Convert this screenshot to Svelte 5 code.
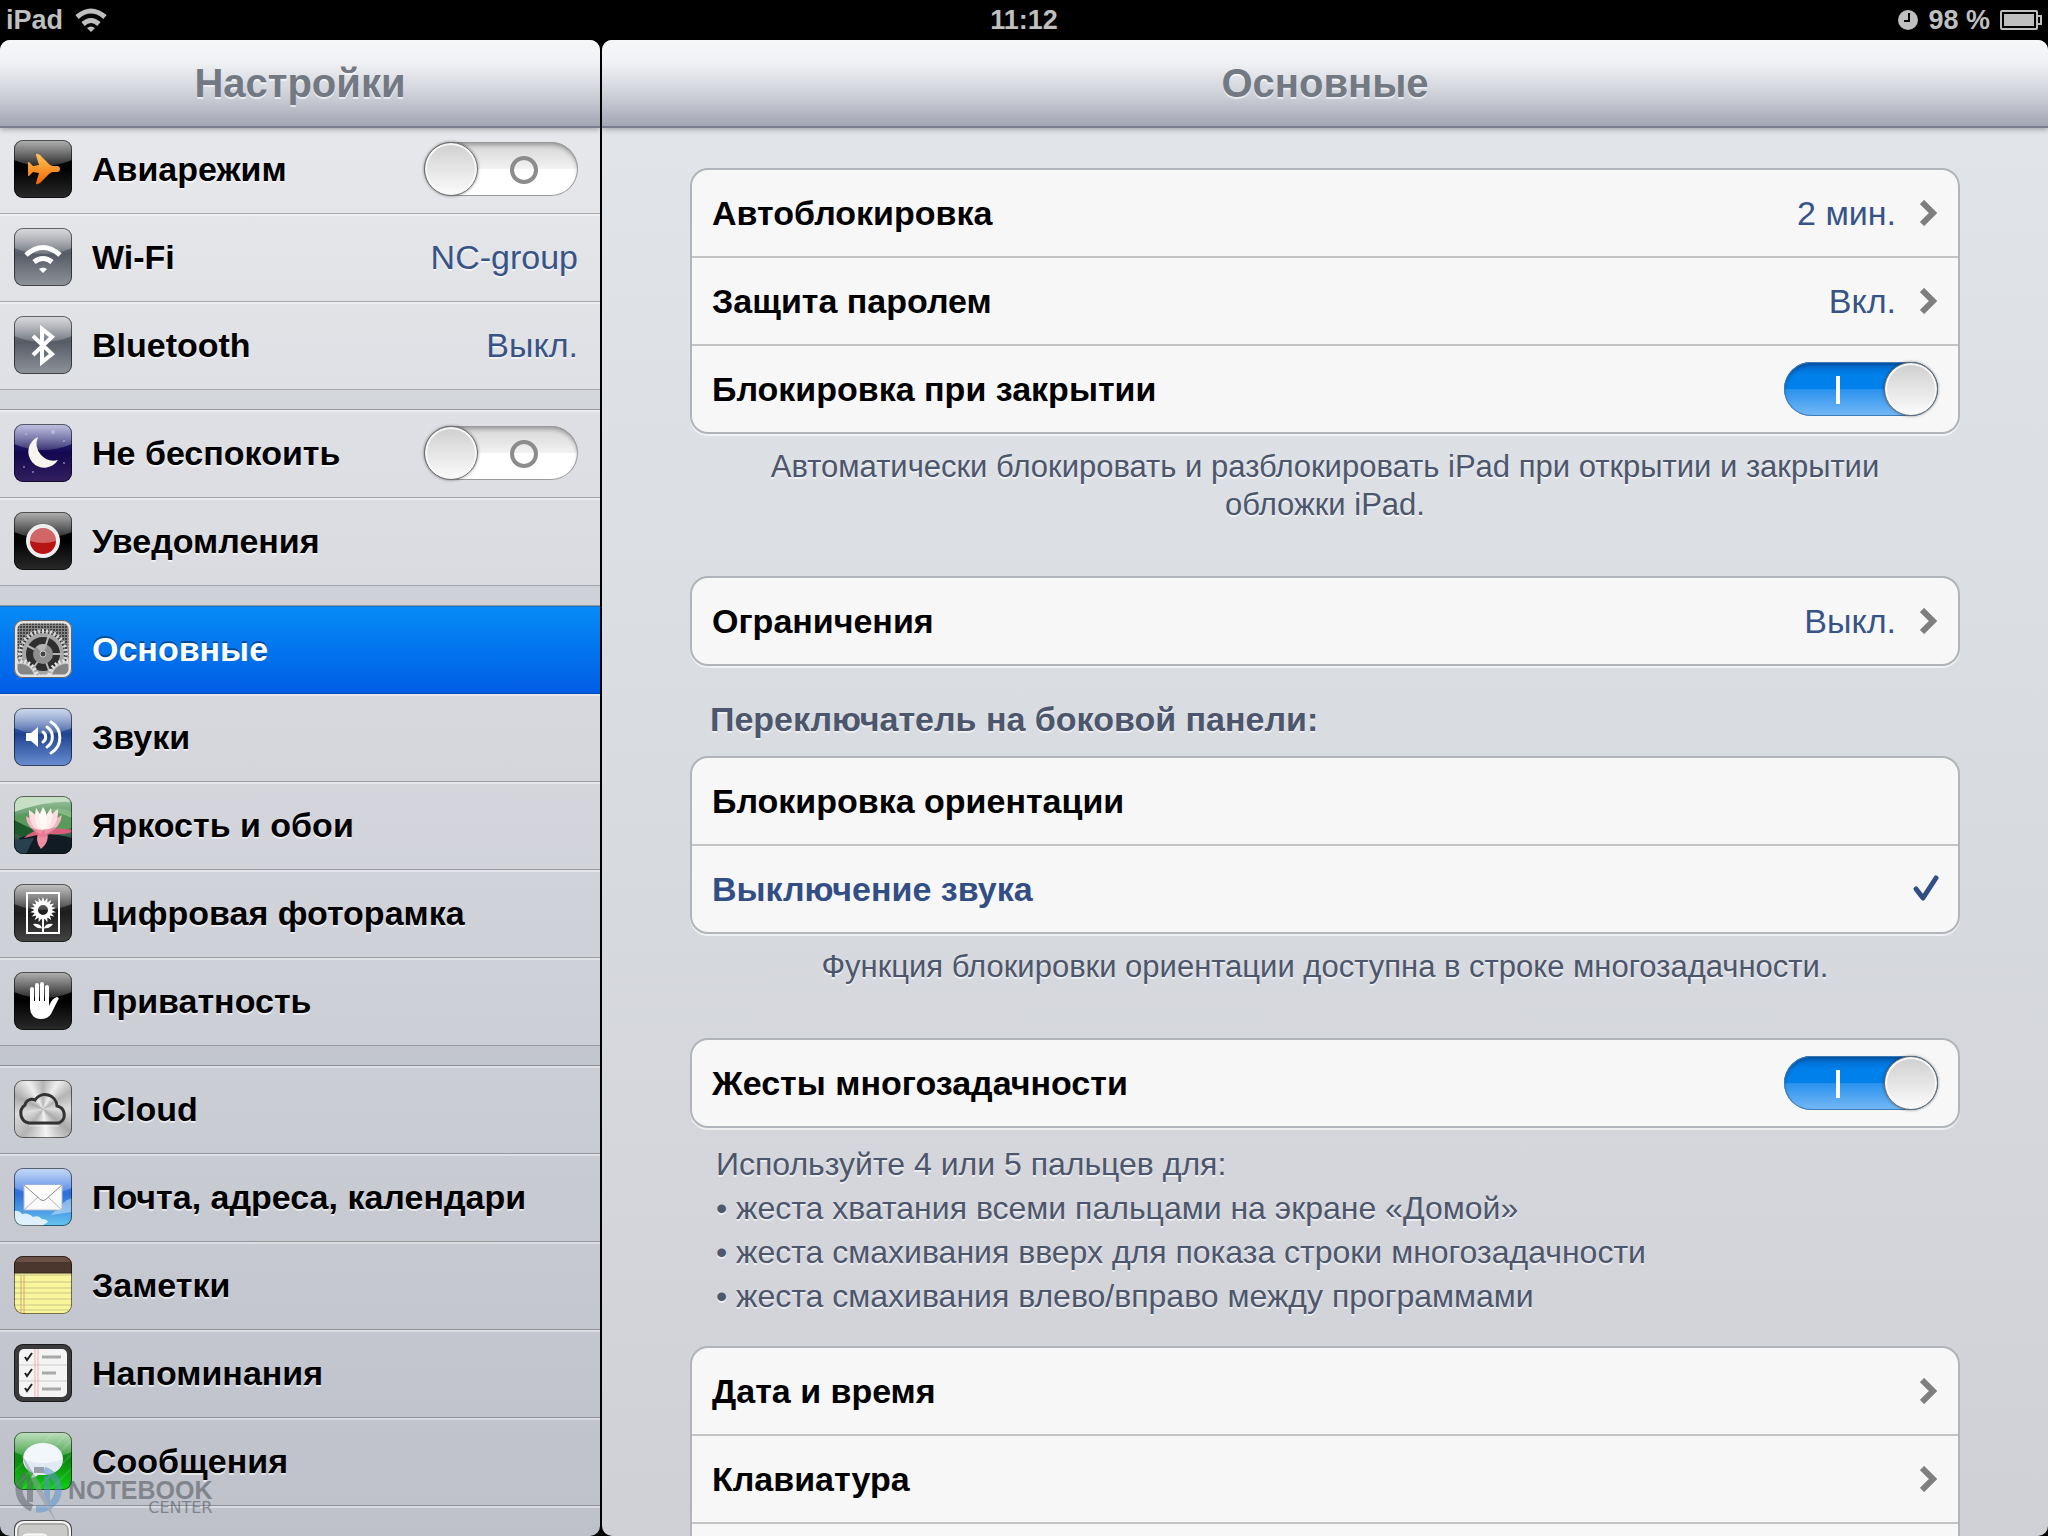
<script lang="ts">
  let airplane = $state(false);
  let doNotDisturb = $state(false);
  let lockOnClose = $state(true);
  let gestures = $state(true);
  let sideSwitch = $state('mute');
  let current = $state('general');

  const menu = [
    [
      { id: 'airplane', label: 'Авиарежим', toggle: true },
      { id: 'wifi', label: 'Wi-Fi', value: 'NC-group' },
      { id: 'bluetooth', label: 'Bluetooth', value: 'Выкл.' }
    ],
    [
      { id: 'dnd', label: 'Не беспокоить', toggle: true },
      { id: 'notifications', label: 'Уведомления' }
    ],
    [
      { id: 'general', label: 'Основные' },
      { id: 'sounds', label: 'Звуки' },
      { id: 'wallpaper', label: 'Яркость и обои' },
      { id: 'frame', label: 'Цифровая фоторамка' },
      { id: 'privacy', label: 'Приватность' }
    ],
    [
      { id: 'icloud', label: 'iCloud' },
      { id: 'mail', label: 'Почта, адреса, календари' },
      { id: 'notes', label: 'Заметки' },
      { id: 'reminders', label: 'Напоминания' },
      { id: 'messages', label: 'Сообщения' },
      { id: 'facetime', label: '' }
    ]
  ];

  const glossy = ['airplane', 'wifi', 'bluetooth', 'dnd', 'notifications', 'sounds', 'frame', 'privacy', 'mail', 'messages'];

  const range = (n: number) => Array.from({ length: n }, (_, i) => i);
</script>

{#snippet icon(id: string)}
  <svg class="tile {id}" viewBox="0 0 58 58" aria-hidden="true">
    {#if id === 'airplane'}
      <defs>
        <linearGradient id="orange" x1="0" y1="0" x2="0" y2="1">
          <stop offset="0" stop-color="#ffc55a" />
          <stop offset="1" stop-color="#f06400" />
        </linearGradient>
      </defs>
    {:else if id === 'mail'}
      <path fill="#fff" opacity=".8" d="M0 43Q5 42 8 46Q14 44 19 49Q25 47 28 51Q33 51 34 54L28 58H0Z" />
      <path fill="#fff" opacity=".4" d="M37 47Q42 41 47 42Q47 33 58 30V44Q50 45 37 47Z" />
    {:else if id === 'messages'}
      <path stroke="#fff" stroke-opacity=".1" stroke-width="2" d="M0 40L40 0M0 55L55 0M8 58L58 8M22 58L58 22M36 58L58 36" />
    {/if}

    {#if glossy.includes(id)}
      <defs>
        <linearGradient id="gloss-{id}" x1="0" y1="0" x2="0" y2="1">
          <stop offset="0" stop-color="#fff" stop-opacity=".68" />
          <stop offset="1" stop-color="#fff" stop-opacity=".16" />
        </linearGradient>
      </defs>
      <path fill="url(#gloss-{id})" d="M0 0H58V20Q29 32 0 20Z" />
    {/if}

    {#if id === 'airplane'}
      <path fill="url(#orange)" d="M22 15Q22 13 24 14L26 15L35 24Q37 26 39 26H43Q46 26 46 29Q46 32 43 32H39Q37 32 35 34L26 43L24 44Q22 45 22 43L25 33L19 32L15 36H14V22H15L19 26L25 25Z" />
    {:else if id === 'wifi'}
      <g fill="none" stroke="#fff" stroke-width="5">
        <path d="M12 27Q29 12 46 27" />
        <path d="M20 34Q29 27 38 34" />
      </g>
      <path fill="#fff" d="M25 41Q29 38 33 41L29 45Z" />
    {:else if id === 'bluetooth'}
      <path fill="none" stroke="#fff" stroke-width="4" d="M19 20L38 38L28 46V13L38 21L19 39" />
    {:else if id === 'dnd'}
      <g fill="#c9ccf5" opacity=".6">
        <circle cx="39" cy="8" r="2" /><circle cx="12" cy="10" r="1" /><circle cx="50" cy="17" r="1" />
        <circle cx="10" cy="43" r="1" /><circle cx="50" cy="39" r="1" /><circle cx="19" cy="48" r="1" />
      </g>
      <path fill="#f7f5ee" d="M24 13A16 16 0 1 0 44 36A17 17 0 0 1 24 13Z" />
    {:else if id === 'notifications'}
      <circle cx="29" cy="29" r="17" fill="#eee" />
      <circle cx="29" cy="29" r="13" fill="#b81414" />
      <path fill="#fff" opacity=".35" d="M16 29A13 13 0 0 1 42 29Q29 33 16 29Z" />
    {:else if id === 'general'}
      <defs>
        <pattern id="mesh" width="3" height="3" patternUnits="userSpaceOnUse">
          <circle cx="1" cy="1" r="1" fill="#2a2a2a" />
        </pattern>
      </defs>
      <rect width="58" height="58" fill="#858585" />
      <rect width="58" height="58" fill="url(#mesh)" />
      <circle cx="29" cy="34" r="22" fill="#2f2f2f" />
      <g fill="#d8d8d8">
        {#each range(36) as i}
          <path d="M28 14L28 9H30L30 14Z" transform="rotate({i * 10} 29 34)" />
        {/each}
      </g>
      <circle cx="29" cy="34" r="19" fill="none" stroke="#a6a6a6" stroke-width="4" />
      <path stroke="#b5b5b5" stroke-width="2" d="M29 34L35 15M29 34H48M29 34L36 53M29 34L18 50M29 34L12 25" />
      <circle cx="29" cy="34" r="10" fill="#8f8f8f" />
      <path fill="#b4b4b4" d="M29 34L22 27A10 10 0 0 1 33 25Z" />
      <circle cx="29" cy="34" r="3" fill="#444" stroke="#ccc" />
      {#each [6, 52] as cx}
        <circle {cx} cy="58" r="15" fill="#858585" stroke="#c4c4c4" stroke-width="2" />
        <circle {cx} cy="58" r="17" fill="none" stroke="#e4e4e4" stroke-width="4" stroke-dasharray="2 2" />
      {/each}
      <rect x="1" y="1" width="56" height="56" rx="8" fill="none" stroke="#e4e4e4" stroke-width="5" />
    {:else if id === 'sounds'}
      <path fill="#fff" d="M12 25H17L24 19V39L17 33H12Z" />
      <g fill="none" stroke="#fff" stroke-width="3" stroke-linecap="round">
        <path d="M29 24A6 6 0 0 1 29 34" />
        <path d="M33 19A12 12 0 0 1 33 39" />
        <path d="M37 14A18 18 0 0 1 37 45" />
      </g>
    {:else if id === 'wallpaper'}
      <path fill="#c6dfc4" d="M0 0H58V6Q34 4 0 16Z" />
      <path fill="#5a9a5c" d="M0 20Q26 12 58 20V32Q30 40 0 35Z" />
      <path fill="#86b884" d="M34 14Q48 10 58 16V22Q44 16 34 14Z" />
      <path fill="#1d5a2c" d="M0 24L22 35L14 42L0 38Z" />
      <path fill="#101b24" d="M5 42Q29 34 58 42V58H10Z" />
      <path fill="#27414f" d="M0 44L20 42L12 58H0Z" />
      <path fill="#d95f7c" d="M10 42Q18 34 29 34L28 38ZM58 34Q46 31 32 34L36 38Q50 39 58 36Z" />
      <path fill="#f08ca2" d="M25 36Q20 44 27 53Q36 46 33 36Z" />
      <path fill="#f2b6c2" d="M12 20Q12 31 26 38Q24 26 12 20ZM48 19Q47 31 33 38Q35 26 48 19Z" />
      <path fill="#fbdcdf" d="M15 14Q14 29 27 38Q29 22 15 14ZM44 13Q45 29 32 38Q30 22 44 13Z" />
      <path fill="#fff0ec" d="M22 12Q18 26 28 38Q32 24 22 12ZM37 12Q41 26 31 38Q27 24 37 12Z" />
      <path fill="#fffaf5" d="M29 11Q22 22 29 36Q37 22 29 11Z" />
      <path fill="#e8718d" opacity=".7" d="M18 32Q29 36 41 31Q38 38 31 41H27Q20 38 18 32Z" />
    {:else if id === 'frame'}
      <rect x="13" y="9" width="32" height="40" fill="none" stroke="#fff" stroke-width="2" />
      {#each range(18) as i}
        <path fill="#fff" d="M27 19L29 13L31 19Z" transform="rotate({i * 20} 29 26)" />
      {/each}
      <circle cx="29" cy="26" r="7" fill="none" stroke="#fff" stroke-width="4" />
      <path fill="#fff" d="M28 35H30V49H28ZM28 44Q22 45 19 40Q26 39 28 44ZM30 44Q36 45 39 40Q32 39 30 44Z" />
    {:else if id === 'privacy'}
      <g stroke="#fff" stroke-width="4" stroke-linecap="round">
        <path d="M18 17V34M23 13V34M28 12V34M33 15V34" />
      </g>
      <path fill="#fff" d="M16 29H35V34Q38 26 43 25Q46 26 44 28Q40 36 37 42Q34 47 27 47Q17 47 16 36Z" />
    {:else if id === 'icloud'}
      <path fill="none" stroke="#333" stroke-width="3" d="M15 43A10 10 0 0 1 11 25A7 7 0 0 1 21 20A12 12 0 0 1 43 26A9 9 0 0 1 45 43Z" />
      <path fill="none" stroke="#fff" opacity=".6" d="M15 46H45" />
    {:else if id === 'mail'}
      <rect x="10" y="17" width="38" height="25" fill="#fafafa" stroke="#b5bccb" />
      <path fill="none" stroke="#b3b3b3" d="M10 42L24 29M48 42L34 29" />
      <path fill="#fff" stroke="#8b8b8b" d="M10 17L27 32Q29 33 31 32L48 17" />
    {:else if id === 'notes'}
      <path fill="#4c372f" d="M0 0H58V17H0Z" />
      <path fill="#6b5046" d="M0 0H58V6H0Z" />
      <path stroke="#35241d" d="M0 17H58" />
      <path stroke="#c9c68c" d="M0 19H58M0 26H58M0 32H58M0 37H58M0 43H58M0 49H58M0 54H58" />
      <path stroke="#d0aa6a" d="M7 19V58M10 19V58" />
    {:else if id === 'reminders'}
      <rect x="5" y="5" width="48" height="48" rx="5" fill="#f4f4f4" />
      <path stroke="#cdcdcd" d="M5 21H53M5 37H53" />
      <path stroke="#f3aaaa" d="M21 5V53M24 5V53" />
      <path stroke="#a8a8a8" stroke-width="3" d="M28 13H47M28 29H42M28 45H47" />
      <path fill="none" stroke="#222" stroke-width="2" d="M11 13L13 16L18 9M11 29L13 32L18 25M11 44L13 47L18 40" />
    {:else if id === 'messages'}
      <path fill="#f2f7fc" d="M29 11C41 11 49 18 49 27C49 37 40 43 29 43Q26 43 24 43Q21 46 17 46Q19 43 19 41C12 38 9 33 9 27C9 18 17 11 29 11Z" />
      <path fill="#cfdcee" opacity=".5" d="M9 27Q29 35 49 27C49 37 40 43 29 43C17 43 9 36 9 27Z" />
    {:else if id === 'facetime'}
      <rect x="2" y="2" width="54" height="54" rx="8" fill="#c9c9c7" stroke="#f4f4f4" stroke-width="2" />
      <rect x="4" y="4" width="50" height="50" rx="6" fill="none" stroke="#8b8b8b" />
      <rect x="8" y="14" width="26" height="24" rx="5" fill="#eee" stroke="#fff" />
    {/if}
    <rect class="edge" width="58" height="58" rx="9" />
  </svg>
{/snippet}

{#snippet wifiSign()}
  <svg class="wifi-sign" viewBox="0 0 32 24" aria-hidden="true">
    <g fill="none" stroke="#bfbfbf" stroke-width="5">
      <path d="M2 9Q16 -3 30 9" />
      <path d="M8 16Q16 9 24 16" />
    </g>
    <path fill="#bfbfbf" d="M12 20Q16 17 20 20L16 24Z" />
  </svg>
{/snippet}

{#snippet chevron()}
  <svg class="chevron" viewBox="0 0 18 26" aria-hidden="true">
    <path d="M2 2L13 13L2 24" fill="none" stroke="#7f7f7f" stroke-width="6" />
  </svg>
{/snippet}

<div class="screen">
  <div class="statusbar">
    <div class="left">iPad {@render wifiSign()}</div>
    <time>11:12</time>
    <div class="right">
      <svg class="clock" viewBox="0 0 20 20" aria-hidden="true">
        <circle cx="10" cy="10" r="10" fill="#bfbfbf" />
        <path d="M11 3V11H6" fill="none" stroke="#000" stroke-width="2" />
      </svg>
      <span>98 %</span>
      <svg class="battery" viewBox="0 0 42 20" aria-hidden="true">
        <rect x="1" y="1" width="36" height="18" rx="1" fill="none" stroke="#bfbfbf" stroke-width="2" />
        <rect x="4" y="4" width="30" height="12" fill="#bfbfbf" />
        <path d="M38 6H41V14H38" fill="none" stroke="#bfbfbf" stroke-width="2" />
      </svg>
    </div>
  </div>

  <div class="panes">
    <aside class="sidebar">
      <header><h1>Настройки</h1></header>
      <nav>
        {#each menu as group}
          <ul>
            {#each group as item}
              <li>
                {#if item.toggle}
                  <label class="item">
                    {@render icon(item.id)}
                    <span class="name">{item.label}</span>
                    {#if item.id === 'airplane'}
                      <input class="switch" type="checkbox" bind:checked={airplane} />
                    {:else}
                      <input class="switch" type="checkbox" bind:checked={doNotDisturb} />
                    {/if}
                  </label>
                {:else}
                  <button
                    type="button"
                    class="item"
                    class:active={current === item.id}
                    aria-label={item.label ? undefined : item.id}
                    onclick={() => (current = item.id)}
                  >
                    {@render icon(item.id)}
                    <span class="name">{item.label}</span>
                    {#if item.value}<span class="value">{item.value}</span>{/if}
                  </button>
                {/if}
              </li>
            {/each}
          </ul>
        {/each}
      </nav>
    </aside>

    <main class="detail">
      <header><h1>Основные</h1></header>
      <div class="content">
        <section>
          <div class="card">
            <button type="button" class="row">
              <span class="name">Автоблокировка</span><span class="value">2 мин.</span>{@render chevron()}
            </button>
            <button type="button" class="row">
              <span class="name">Защита паролем</span><span class="value">Вкл.</span>{@render chevron()}
            </button>
            <label class="row">
              <span class="name">Блокировка при закрытии</span>
              <input class="switch" type="checkbox" bind:checked={lockOnClose} />
            </label>
          </div>
          <p class="hint">Автоматически блокировать и разблокировать iPad при открытии и закрытии обложки iPad.</p>
        </section>

        <section>
          <div class="card">
            <button type="button" class="row">
              <span class="name">Ограничения</span><span class="value">Выкл.</span>{@render chevron()}
            </button>
          </div>
        </section>

        <section>
          <h2 id="side-switch">Переключатель на боковой панели:</h2>
          <div class="card" role="radiogroup" aria-labelledby="side-switch">
            {#each [['rotation', 'Блокировка ориентации'], ['mute', 'Выключение звука']] as [value, label]}
              <label class="row" class:picked={sideSwitch === value}>
                <input class="hidden-radio" type="radio" name="side" {value} bind:group={sideSwitch} />
                <span class="name">{label}</span>
                {#if sideSwitch === value}
                  <svg class="check" viewBox="0 0 26 28" aria-hidden="true">
                    <path d="M4 14L11 23L24 3" fill="none" stroke="#324f85" stroke-width="5" stroke-linecap="round" stroke-linejoin="round" />
                  </svg>
                {/if}
              </label>
            {/each}
          </div>
          <p class="hint">Функция блокировки ориентации доступна в строке многозадачности.</p>
        </section>

        <section>
          <div class="card">
            <label class="row">
              <span class="name">Жесты многозадачности</span>
              <input class="switch" type="checkbox" bind:checked={gestures} />
            </label>
          </div>
          <div class="tips">
            <p>Используйте 4 или 5 пальцев для:</p>
            <p>• жеста хватания всеми пальцами на экране «Домой»</p>
            <p>• жеста смахивания вверх для показа строки многозадачности</p>
            <p>• жеста смахивания влево/вправо между программами</p>
          </div>
        </section>

        <section>
          <div class="card">
            <button type="button" class="row"><span class="name">Дата и время</span>{@render chevron()}</button>
            <button type="button" class="row"><span class="name">Клавиатура</span>{@render chevron()}</button>
            <button type="button" class="row" aria-label="Далее"></button>
          </div>
        </section>
      </div>
    </main>
  </div>

  <div class="watermark">
    <svg viewBox="0 0 56 64" aria-hidden="true">
      <path fill="none" stroke="#5f666e" stroke-width="7" d="M20 50A20 20 0 0 1 14 16" />
      <path fill="none" stroke="#5b92cc" stroke-width="7" d="M32 12A20 20 0 0 1 29 51L24 51" />
      <path fill="none" stroke="#5f666e" stroke-width="6" d="M18 44V20M22 12H32" />
      <path fill="none" stroke="#5b92cc" stroke-width="6" d="M35 46V18" />
      <path fill="#8d97a1" d="M8 -6L27 24L44 64L25 34Z" />
    </svg>
    <div class="words"><b>NOTEBOOK</b><span>CENTER</span></div>
  </div>
</div>

<style>
  :global(body) {
    margin: 0;
    background: #000;
  }

  .screen {
    position: relative;
    display: flex;
    flex-direction: column;
    height: 100vh;
    overflow: hidden;
    font-family: 'Liberation Sans', Arial, sans-serif;
    color: #000;
  }

  h1,
  h2,
  p,
  ul {
    margin: 0;
    padding: 0;
    list-style: none;
  }

  .statusbar {
    display: grid;
    grid-template-columns: 1fr auto 1fr;
    align-items: center;
    flex: none;
    height: 40px;
    padding: 0 6px;
    box-sizing: border-box;
    background: #000;
    color: #bfbfbf;
    font-size: 27px;
    font-weight: bold;
  }
  .statusbar .left,
  .statusbar .right {
    display: flex;
    align-items: center;
    gap: 12px;
  }
  .statusbar .right {
    justify-content: flex-end;
    gap: 10px;
  }
  .wifi-sign {
    width: 32px;
    height: 24px;
  }
  .clock {
    width: 20px;
    height: 20px;
  }
  .battery {
    width: 42px;
    height: 20px;
  }

  .panes {
    display: grid;
    grid-template-columns: 600px 1fr;
    gap: 2px;
    flex: 1;
    min-height: 0;
  }
  .sidebar,
  .detail {
    display: flex;
    flex-direction: column;
    min-height: 0;
    overflow: hidden;
    border-radius: 10px;
  }
  .sidebar {
    background: linear-gradient(#e9eaed, #bec1ca);
  }
  .detail {
    background: linear-gradient(#e2e5ea, #d9dce1 45%, #d0d1d6);
  }

  header {
    position: relative;
    z-index: 1;
    display: flex;
    align-items: center;
    justify-content: center;
    flex: none;
    height: 88px;
    box-sizing: border-box;
    border-bottom: 2px solid #797d8d;
    background: linear-gradient(#f6f7f9, #f1f2f5 25%, #d2d4dc 60%, #a3a6b4);
    box-shadow: 0 1px 6px rgba(0, 0, 0, .35);
  }
  h1 {
    font-size: 40px;
    line-height: 48px;
    color: #727982;
    text-shadow: 0 2px 0 rgba(255, 255, 255, .6);
  }

  nav {
    display: flex;
    flex-direction: column;
    gap: 20px;
    margin-top: -2px;
  }
  nav ul {
    border-top: 1px solid rgba(0, 0, 0, .28);
    margin-top: -1px;
    box-shadow: 0 20px 0 rgba(120, 125, 140, .1);
  }

  .item,
  .row {
    display: flex;
    align-items: center;
    width: 100%;
    height: 88px;
    box-sizing: border-box;
    border: 0;
    background: none;
    font: inherit;
    font-size: 34px;
    line-height: 40px;
    text-align: left;
    color: #000;
    cursor: pointer;
  }
  .item {
    gap: 20px;
    padding: 0 22px 2px 14px;
    box-shadow: inset 0 -1px 0 rgba(0, 0, 0, .25), inset 0 2px 0 rgba(255, 255, 255, .4);
    text-shadow: 0 2px 0 rgba(255, 255, 255, .6);
  }
  .item.active {
    background: linear-gradient(#068cf6, #005de6);
    box-shadow: inset 0 1px 0 #1374c9, inset 0 -1px 0 #0049b8;
    color: #fff;
    text-shadow: 0 -2px 0 rgba(0, 0, 0, .4);
  }
  .name {
    flex: 1;
    font-weight: bold;
  }
  .value {
    color: #385487;
  }

  .tile {
    flex: none;
    width: 58px;
    height: 58px;
    border-radius: 9px;
  }
  .edge {
    fill: none;
    stroke: #000;
    stroke-opacity: .55;
    stroke-width: 2;
  }
  .airplane,
  .notifications,
  .privacy {
    background: linear-gradient(#111, #000 50%, #2a2a2a);
  }
  .wifi,
  .bluetooth {
    background: linear-gradient(#8a8d94, #565b66 45%, #8f939a);
  }
  .dnd {
    background: linear-gradient(#3c44a0, #140850 50%, #33205f);
  }
  .general {
    background: #888;
  }
  .sounds {
    background: linear-gradient(#6a8bc9, #1f4391 45%, #6b8fd0);
  }
  .wallpaper {
    background: linear-gradient(#9cc7a0, #5d9464 40%, #122530);
  }
  .frame {
    background: linear-gradient(#444, #1d1d1d 50%, #444);
  }
  .icloud {
    background: conic-gradient(#b4b4b4, #eee 8%, #b4b4b4 16%, #ddd 25%, #aaa 36%, #f4f4f4 48%, #b4b4b4 60%, #ddd 72%, #aaa 82%, #eee 92%, #b4b4b4);
  }
  .mail {
    background: linear-gradient(#4d8ae8, #2e6fdc 45%, #64c6ee);
  }
  .notes {
    background: #f8f59a;
  }
  .reminders {
    background: #3b3b3d;
  }
  .messages {
    background: linear-gradient(#3a9a3a, #0b8a10 50%, #0fd30f);
  }
  .facetime {
    background: #999;
  }

  .switch {
    position: relative;
    flex: none;
    width: 154px;
    height: 54px;
    margin: 0;
    appearance: none;
    border-radius: 27px;
    background: linear-gradient(#d5d5d5, #ececec 40%, #f3f3f3 50%, #fff 51%);
    box-shadow: inset 0 0 0 1px #9a9a9a, inset 0 3px 4px rgba(0, 0, 0, .3);
    cursor: pointer;
  }
  .switch::before {
    content: '';
    position: absolute;
    top: 0;
    left: 0;
    width: 54px;
    height: 54px;
    box-sizing: border-box;
    border: 1px solid #6c6c6c;
    border-radius: 50%;
    background: linear-gradient(#cfcfcf, #fbfbfb);
    box-shadow: inset 0 0 0 2px #f8f8f8, 0 0 3px rgba(0, 0, 0, .5);
  }
  .switch::after {
    content: '';
    position: absolute;
    top: 14px;
    left: 86px;
    width: 28px;
    height: 28px;
    box-sizing: border-box;
    border: 4px solid #8c8c8c;
    border-radius: 50%;
  }
  .switch:checked {
    background: linear-gradient(#0068cd, #0080ea 25%, #0080ea 50%, #2a92ee 51%, #76b8f5);
    box-shadow: inset 0 0 0 1px #3f7bb5, inset 0 3px 4px rgba(0, 0, 0, .3);
  }
  .switch:checked::before {
    left: 100px;
  }
  .switch:checked::after {
    left: 52px;
    width: 4px;
    border: 0;
    border-radius: 0;
    background: #fff;
  }

  .content {
    padding: 40px 88px;
  }
  section {
    display: flex;
    flex-direction: column;
  }
  .card {
    overflow: hidden;
    border: 2px solid #b1b4b9;
    border-radius: 18px;
    background: #f7f7f7;
    box-shadow: 0 2px 0 rgba(255, 255, 255, .6);
  }
  .row {
    padding: 0 20px;
    border-bottom: 2px solid #c4c4c6;
  }
  .row:last-child {
    height: 86px;
    border-bottom: 0;
  }
  .row .value {
    margin-right: 24px;
  }
  .picked {
    color: #324f85;
  }
  .chevron {
    width: 18px;
    height: 26px;
  }
  .check {
    width: 26px;
    height: 28px;
    overflow: visible;
  }
  .hidden-radio {
    position: absolute;
    opacity: 0;
  }

  h2 {
    padding: 32px 20px 16px;
    font-size: 34px;
    line-height: 42px;
    color: #4c566c;
    text-shadow: 0 2px 0 rgba(255, 255, 255, .6);
  }
  .hint,
  .tips {
    color: #4c566c;
    text-shadow: 0 2px 0 rgba(255, 255, 255, .6);
  }
  .hint {
    padding: 14px 60px 52px;
    font-size: 31px;
    line-height: 38px;
    text-align: center;
  }
  .tips {
    padding: 14px 26px 28px;
    font-size: 32px;
    line-height: 44px;
  }

  .watermark {
    position: absolute;
    bottom: 14px;
    left: 12px;
    display: flex;
    align-items: flex-start;
    opacity: .55;
    pointer-events: none;
  }
  .watermark svg {
    width: 56px;
    height: 64px;
    overflow: visible;
  }
  .words {
    display: flex;
    flex-direction: column;
    align-items: flex-end;
    padding-top: 22px;
    color: #4d535b;
  }
  .words b {
    font-size: 25px;
    line-height: 20px;
  }
  .words span {
    font-family: 'DejaVu Sans', sans-serif;
    font-size: 16px;
    line-height: 16px;
  }
</style>
